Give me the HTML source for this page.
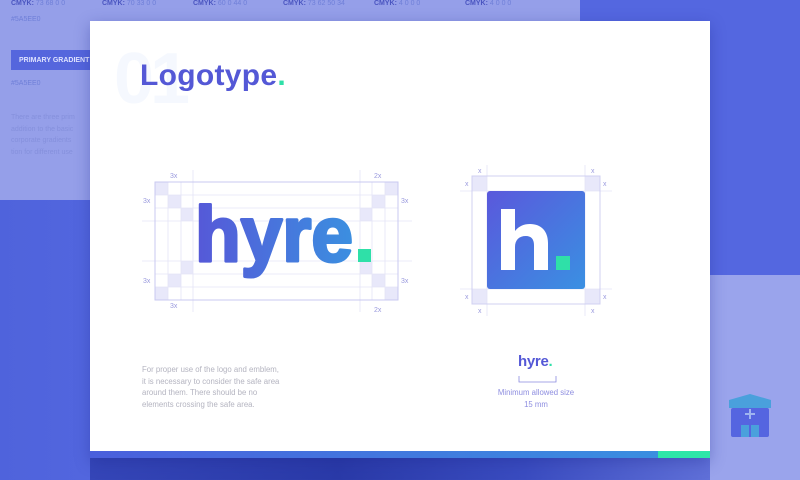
<!DOCTYPE html>
<html><head><meta charset="utf-8"><style>
*{margin:0;padding:0;box-sizing:border-box}
body{width:800px;height:480px;overflow:hidden;position:relative;font-family:"Liberation Sans",sans-serif;background:#4f63dc}
.abs{position:absolute}
.sm{font-size:7px;color:#6f7fd8;white-space:nowrap}
.sm b{color:#4a55c0}
</style></head><body>
<div class="abs" style="left:0;top:0;width:580px;height:200px;background:#959fe9"></div>
<div class="abs" style="left:580px;top:0;width:220px;height:275px;background:#5467e0"></div>
<div class="abs" style="left:700px;top:275px;width:100px;height:205px;background:#9aa4ec"></div>
<div class="abs" style="left:0;top:200px;width:90px;height:280px;background:linear-gradient(90deg,#4f63dc,#5266de)"></div>
<div class="abs" style="left:90px;top:455px;width:620px;height:25px;background:linear-gradient(90deg,#3546b8,#2a3aa8 40%,#3a4cc0 70%,#6070d8)"></div>

<div class="abs sm" style="left:11px;top:0"><b>CMYK:</b> 73 68 0 0</div>
<div class="abs sm" style="left:102px;top:0"><b>CMYK:</b> 70 33 0 0</div>
<div class="abs sm" style="left:193px;top:0"><b>CMYK:</b> 60 0 44 0</div>
<div class="abs sm" style="left:283px;top:0"><b>CMYK:</b> 73 62 50 34</div>
<div class="abs sm" style="left:374px;top:0"><b>CMYK:</b> 4 0 0 0</div>
<div class="abs sm" style="left:465px;top:0"><b>CMYK:</b> 4 0 0 0</div>
<div class="abs sm" style="left:11px;top:16px">#5A5EE0</div>
<div class="abs" style="left:11px;top:50px;width:80px;height:20px;background:#5566dd;color:#dfe3ff;font-size:7px;font-weight:bold;padding:7px 8px;white-space:nowrap">PRIMARY GRADIENT</div>
<div class="abs sm" style="left:11px;top:80px">#5A5EE0</div>
<div class="abs" style="left:11px;top:112px;font-size:7px;line-height:11.5px;color:#8590dc;white-space:nowrap">There are three prim<br>addition to the basic<br>corporate gradients<br>tion for different use</div>

<div class="abs" style="left:90px;top:21px;width:620px;height:437px;background:#fff;box-shadow:0 4px 14px rgba(30,40,140,.35)"></div>
<div class="abs" style="left:90px;top:451px;width:568px;height:7px;background:linear-gradient(90deg,#4a5fdc,#3a8ee0)"></div>
<div class="abs" style="left:658px;top:451px;width:52px;height:7px;background:#2ee6a8"></div>

<div class="abs" style="left:114px;top:38px;font-size:72px;font-weight:bold;color:#f5f8fe;letter-spacing:-4px">01</div>
<div class="abs" style="left:140px;top:59px;font-size:30px;font-weight:bold;color:#5458d6;letter-spacing:0.3px">Logotype<span style="color:#2fe0a8">.</span></div>

<svg class="abs" style="left:0;top:0" width="800" height="480">
<defs><linearGradient id="g" x1="0" y1="0" x2="1" y2="1"><stop offset="0" stop-color="#5a58dc"/><stop offset="1" stop-color="#3a90e2"/></linearGradient>
<linearGradient id="g2" x1="0" y1="0" x2="1" y2="0"><stop offset="0" stop-color="#5658d8"/><stop offset="1" stop-color="#3b8fe0"/></linearGradient></defs>
<g fill="#e8e8fa">
<rect x="155" y="182" width="13" height="13"/><rect x="168" y="195" width="13" height="13"/><rect x="181" y="208" width="12" height="13"/>
<rect x="155" y="287" width="13" height="13"/><rect x="168" y="274" width="13" height="13"/><rect x="181" y="261" width="12" height="13"/>
<rect x="385" y="182" width="13" height="13"/><rect x="372" y="195" width="13" height="13"/><rect x="360" y="208" width="12" height="13"/>
<rect x="385" y="287" width="13" height="13"/><rect x="372" y="274" width="13" height="13"/><rect x="360" y="261" width="12" height="13"/>
<rect x="472" y="176" width="15" height="15"/><rect x="585" y="176" width="15" height="15"/><rect x="472" y="289" width="15" height="15"/><rect x="585" y="289" width="15" height="15"/>
</g>
<g stroke="#e4e4f6" stroke-width="0.8" fill="none">
<line x1="155" y1="195" x2="398" y2="195"/><line x1="155" y1="208" x2="398" y2="208"/><line x1="142" y1="221" x2="412" y2="221"/>
<line x1="142" y1="261" x2="412" y2="261"/><line x1="155" y1="274" x2="398" y2="274"/><line x1="155" y1="287" x2="398" y2="287"/>
<line x1="168" y1="182" x2="168" y2="300"/><line x1="181" y1="182" x2="181" y2="300"/><line x1="193" y1="170" x2="193" y2="312"/>
<line x1="360" y1="170" x2="360" y2="312"/><line x1="372" y1="182" x2="372" y2="300"/><line x1="385" y1="182" x2="385" y2="300"/>
<line x1="460" y1="191" x2="612" y2="191"/><line x1="460" y1="289" x2="612" y2="289"/><line x1="487" y1="165" x2="487" y2="316"/><line x1="585" y1="165" x2="585" y2="316"/>
</g>
<rect x="155" y="182" width="243" height="118" fill="none" stroke="#c9c9f0" stroke-width="1"/>
<rect x="472" y="176" width="128" height="128" fill="none" stroke="#d0d0f2" stroke-width="1"/>
<text x="195" y="261" font-family="Liberation Sans" font-weight="bold" font-size="78" textLength="158" lengthAdjust="spacingAndGlyphs" fill="url(#g2)" stroke="url(#g2)" stroke-width="3" stroke-linejoin="round">hyre</text>
<rect x="358" y="249" width="13" height="13" fill="#2fe0a8"/>
<rect x="487" y="191" width="98" height="98" rx="3" fill="url(#g)"/>
<path d="M501 209h14v22c4-5 9-7 15-7 11 0 18 7 18 19v27h-14v-25c0-6-3-9-8-9-7 0-11 4-11 11v23h-14z" fill="#fff"/>
<rect x="556" y="256" width="14" height="14" fill="#2fe0a8"/>
<g font-family="Liberation Sans" font-size="7" fill="#9a9ade">
<text x="170" y="178">3x</text><text x="374" y="178">2x</text><text x="170" y="308">3x</text><text x="374" y="312">2x</text>
<text x="143" y="203">3x</text><text x="401" y="203">3x</text><text x="143" y="283">3x</text><text x="401" y="283">3x</text>
<text x="478" y="173">x</text><text x="591" y="173">x</text><text x="478" y="313">x</text><text x="591" y="313">x</text>
<text x="465" y="186">x</text><text x="603" y="186">x</text><text x="465" y="299">x</text><text x="603" y="299">x</text>
</g>
<text x="518" y="366" font-family="Liberation Sans" font-weight="bold" font-size="15" fill="#5458d6" letter-spacing="-0.3">hyre<tspan fill="#2fe0a8">.</tspan></text>
<path d="M519 376v6h37v-6" fill="none" stroke="#8b8be0" stroke-width="0.8"/>
<text x="536" y="395" text-anchor="middle" font-family="Liberation Sans" font-size="7.8" fill="#8e8ee0">Minimum allowed size</text>
<text x="536" y="407" text-anchor="middle" font-family="Liberation Sans" font-size="7.8" fill="#8e8ee0">15 mm</text>
<g font-family="Liberation Sans" font-size="7.8" fill="#b4b4c0">
<text x="142" y="372">For proper use of the logo and emblem,</text>
<text x="142" y="384">it is necessary to consider the safe area</text>
<text x="142" y="395">around them. There should be no</text>
<text x="142" y="407">elements crossing the safe area.</text>
</g>
<path d="M729 400l21-6 21 6v8h-42z" fill="#4aa0dc"/>
<rect x="731" y="408" width="38" height="29" rx="2" fill="#5565e0"/>
<path d="M750 409v10M745 414h10" stroke="#9fb4f0" stroke-width="2"/>
<rect x="741" y="425" width="8" height="12" fill="#4aa0dc"/><rect x="751" y="425" width="8" height="12" fill="#4aa0dc"/>
</svg>
</body></html>
